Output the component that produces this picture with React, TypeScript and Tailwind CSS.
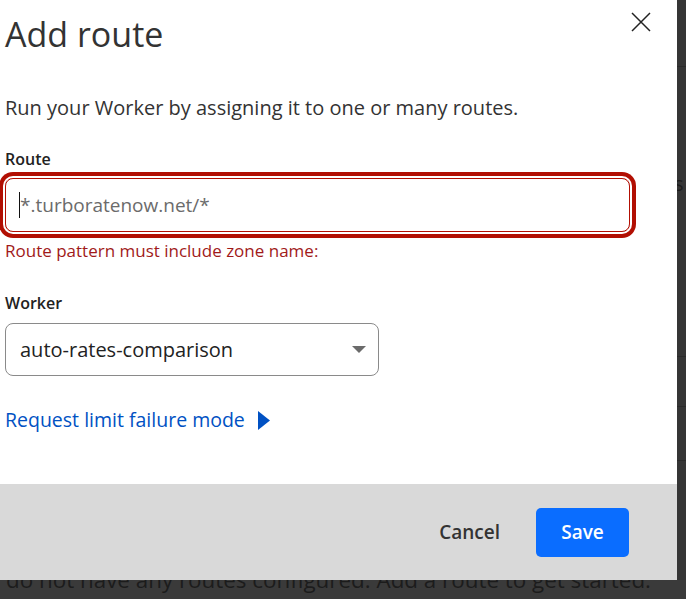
import React from 'react'

const font = "font-['Open_Sans','Noto_Sans',sans-serif]"

function CloseIcon() {
  return (
    <svg width="20" height="20" viewBox="0 0 20 20" fill="none" stroke="#222" strokeWidth="1.5">
      <path d="M1 1 L19 19 M19 1 L1 19" />
    </svg>
  )
}

function Backdrop() {
  // page behind the dialog, dimmed
  return (
    <div aria-hidden className="absolute inset-0 bg-[#353535]">
      <div className="absolute left-[677px] right-0 top-[66px] h-px bg-[#2a2a2a]" />
      <div className="absolute left-[677px] right-0 top-[356px] h-px bg-[#2a2a2a]" />
      <div className="absolute left-[677px] right-0 top-[406px] h-px bg-[#2a2a2a]" />
      <div className="absolute left-[677px] right-0 top-[460px] h-px bg-[#2a2a2a]" />
      <div className="absolute left-[674px] top-[172px] text-[20px] leading-[24px] text-[#1c1c1c]">s</div>
      <div className="absolute bottom-0 left-0 right-0 h-[19px] bg-[#3a3a3a]" />
      <div className="absolute right-[35px] top-[566px] whitespace-nowrap text-[22.4px] leading-[28px] text-[#1c1c1c]">
        You do not have any routes configured. Add a route to get started.
      </div>
    </div>
  )
}

export default function App() {
  return (
    <div className={`relative h-[599px] w-[686px] overflow-hidden ${font}`}>
      <Backdrop />
      <div className="relative flex h-[580px] w-[677px] flex-col bg-white">
        <div className="flex-1 pl-[5px]">
          <div className="flex items-start justify-between pr-[26px]">
            <h2 className="mt-[14px] text-[34px] font-normal leading-[40px] text-[#333]">Add route</h2>
            <button className="mt-[12px]" aria-label="Close">
              <CloseIcon />
            </button>
          </div>

          <p className="mt-[42px] text-[20px] leading-[24px] text-[#333]">
            Run your Worker by assigning it to one or many routes.
          </p>

          <label className="mt-[29px] block text-[16px] font-semibold leading-[20px] text-[#222]">Route</label>
          <div className="mt-[9px] mr-[47px] flex h-[54px] items-center rounded-[8px] border border-[#b20f03] pl-[13px] shadow-[0_0_0_2px_#fff,0_0_0_6px_#b20f03]">
            <span className="h-[26px] w-px bg-[#111]" />
            <span className="text-[19px] leading-[24px] text-[#6b6b6b]">*.turboratenow.net/*</span>
          </div>
          <p className="mt-[8px] text-[17px] leading-[22px] text-[#a11a1a]">Route pattern must include zone name:</p>

          <label className="mt-[31px] block text-[16px] font-semibold leading-[20px] text-[#222]">Worker</label>
          <div className="mt-[10px] flex h-[53px] w-[374px] items-center justify-between rounded-[8px] border border-[#8a8a8a] pl-[14px] pr-[12px]">
            <span className="text-[20px] leading-[24px] text-[#222]">auto-rates-comparison</span>
            <svg width="14" height="7" viewBox="0 0 14 7">
              <path d="M0 0 H14 L7 7 Z" fill="#6b6b6b" />
            </svg>
          </div>

          <a href="#" className="mt-[32px] flex items-center gap-[13px] text-[19.5px] leading-[24px] text-[#0051c3]">
            Request limit failure mode
            <svg width="12" height="19" viewBox="0 0 12 19">
              <path d="M0 0 L12 9.5 L0 19 Z" fill="#0051c3" />
            </svg>
          </a>
        </div>

        <div className="flex h-[96px] items-center justify-end gap-[36px] bg-[#d9d9d9] pr-[48px]">
          <button className="text-[19px] font-semibold text-[#333]">Cancel</button>
          <button className="h-[49px] w-[93px] rounded-[5px] bg-[#0a6dff] text-[19px] font-semibold text-white">Save</button>
        </div>
      </div>
    </div>
  )
}
